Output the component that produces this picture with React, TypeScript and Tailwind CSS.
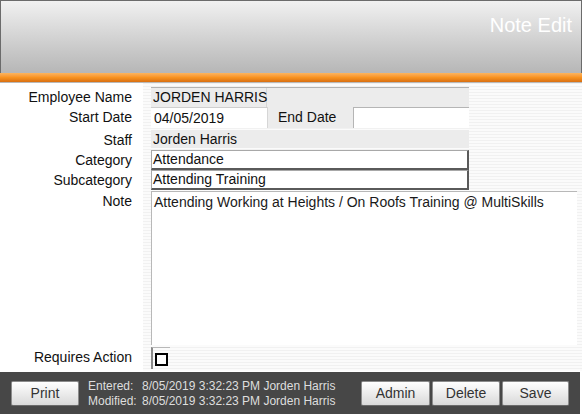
import React from "react";

const stripes =
  "bg-[image:repeating-linear-gradient(to_bottom,#f1f1f1_0px,#f1f1f1_1px,#fbfbfb_1px,#fbfbfb_3px)]";

// each form row: top margin + height, shared by the label column and the field column
const rows = [
  { label: "Employee Name", mt: "mt-[4px]", h: "h-[20px]" },
  { label: "Start Date", mt: "mt-0", h: "h-[21px]" },
  { label: "Staff", mt: "mt-[2px]", h: "h-[18px]" },
  { label: "Category", mt: "mt-[2px]", h: "h-[20px]" },
  { label: "Subcategory", mt: "mt-0", h: "h-[20px]" },
  { label: "Note", mt: "mt-[1px]", h: "h-[154px]" },
  { label: "Requires Action", mt: "mt-[2px]", h: "h-[22px]" },
];

const FooterButton: React.FC<{ label: string; w: string }> = ({ label, w }) => (
  <button
    className={`${w} h-[25px] rounded-[2px] border border-[#8c8c8c] border-b-[#6a6a6a] bg-linear-to-b from-[#ffffff] to-[#d9d9d9] text-[14px] text-[#333] leading-none`}
  >
    {label}
  </button>
);

const App: React.FC = () => {
  return (
    <div className="w-[583px] h-[418px] bg-white font-['Liberation_Sans',Arial,sans-serif] text-[14px] text-[#111]">
      <div className="w-[582px]">
        {/* header */}
        <div className="h-[73px] border-t border-l border-r border-[#6b6b6b] bg-linear-to-b from-[#f1f1f1] to-[#b6b6b6] flex justify-end pt-[14px] pr-[9px]">
          <span className="text-[20px] leading-[20px] text-white">Note Edit</span>
        </div>
        <div className="h-[10px] bg-linear-to-b from-[#fcb45c] via-[#f7921f] to-[#d96f12] border-b border-[#b9b9b9]" />

        {/* form */}
        <div className="flex h-[288px]">
          <div className="w-[143px] bg-white flex flex-col">
            {rows.map((r) => (
              <div
                key={r.label}
                className={`${r.mt} ${r.h} pr-[11px] text-right leading-[20px] whitespace-nowrap`}
              >
                {r.label}
              </div>
            ))}
          </div>
          <div className={`flex-1 ${stripes} flex flex-col pl-[8px]`}>
            {/* Employee Name */}
            <div className={`${rows[0].mt} ${rows[0].h} w-[318px] flex bg-[#ececec] border-t border-[#b3b3b3] leading-[19px]`}>
              <div className="w-[116px] pl-[2px] border-r border-[#d6d6d6] whitespace-nowrap">JORDEN HARRIS</div>
            </div>
            {/* Start / End Date */}
            <div className={`${rows[1].mt} ${rows[1].h} w-[318px] flex leading-[20px]`}>
              <div className="w-[116px] bg-white border-t border-[#cfcfcf] pl-[3px]">04/05/2019</div>
              <div className="w-[86px] bg-[#ececec] border-l border-[#d6d6d6] pl-[10px] whitespace-nowrap">End Date</div>
              <div className="w-[116px] bg-white border-t border-l border-[#b5b5b5]" />
            </div>
            {/* Staff */}
            <div className={`${rows[2].mt} ${rows[2].h} w-[318px] bg-[#ececec] pl-[2px] leading-[18px]`}>
              Jorden Harris
            </div>
            {/* Category */}
            <div className={`${rows[3].mt} ${rows[3].h} w-[318px] bg-white border-t border-l border-[#a8a8a8] border-r-2 border-b-2 border-r-[#5a5a5a] border-b-[#5a5a5a] pl-[1px] leading-[17px]`}>
              Attendance
            </div>
            {/* Subcategory */}
            <div className={`${rows[4].mt} ${rows[4].h} w-[318px] bg-white border-t border-l border-[#a8a8a8] border-r-2 border-b-2 border-r-[#5a5a5a] border-b-[#5a5a5a] pl-[1px] leading-[17px]`}>
              Attending Training
            </div>
            {/* Note */}
            <div className={`${rows[5].mt} ${rows[5].h} w-[426px] bg-white border-t border-l border-[#b8b8b8] pl-[2px] pt-[1px] leading-[18px] text-[#1a1a1a]`}>
              Attending Working at Heights / On Roofs Training @ MultiSkills
            </div>
            {/* Requires Action */}
            <div className={`${rows[6].mt} ${rows[6].h} flex items-start`}>
              <div className="h-full w-[19px] border-l-2 border-t border-l-[#8a8a8a] border-t-[#b8b8b8] pl-[2px] pt-[5px]">
                <div className="w-[13px] h-[13px] border-2 border-black bg-white" />
              </div>
            </div>
          </div>
        </div>

        {/* footer */}
        <div className="mt-[1px] h-[42px] w-[580px] bg-[#474747] flex items-center pl-[11px] pr-[11px]">
          <FooterButton label="Print" w="w-[68px]" />
          <div className="ml-[9px] grid grid-cols-[54px_auto] text-[12px] leading-[15px] text-[#dedede] whitespace-nowrap pt-[1px]">
            <span>Entered:</span>
            <span>8/05/2019 3:32:23 PM Jorden Harris</span>
            <span>Modified:</span>
            <span>8/05/2019 3:32:23 PM Jorden Harris</span>
          </div>
          <div className="ml-auto flex gap-[2px]">
            <FooterButton label="Admin" w="w-[69px]" />
            <FooterButton label="Delete" w="w-[68px]" />
            <FooterButton label="Save" w="w-[67px]" />
          </div>
        </div>
      </div>
    </div>
  );
};

export default App;
